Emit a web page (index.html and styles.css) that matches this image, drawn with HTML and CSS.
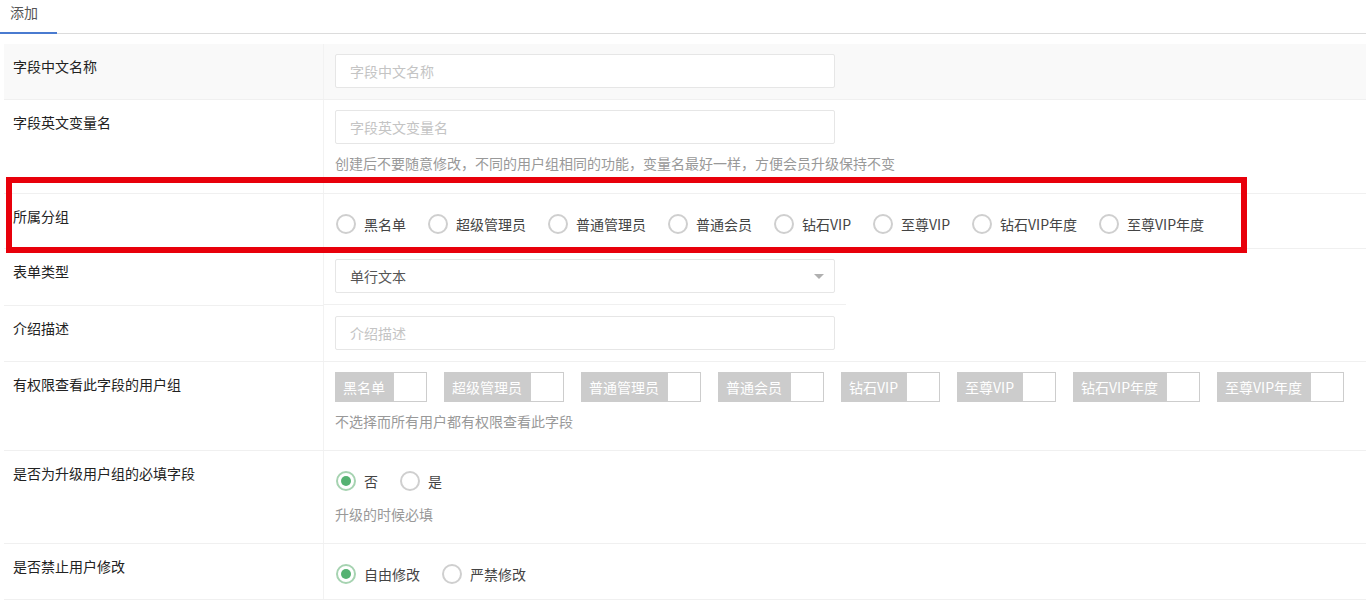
FILE: index.html
```html
<!DOCTYPE html>
<html lang="zh-CN">
<head>
<meta charset="utf-8">
<title>添加字段</title>
<link rel="stylesheet" href="styles.css">
</head>
<body>
<div class="tabs">
  <div class="tab active">添加</div>
</div>
<div class="form">
  <div class="row striped">
    <div class="label">字段中文名称</div>
    <div class="value"><div class="input placeholder">字段中文名称</div></div>
  </div>
  <div class="row r2">
    <div class="label">字段英文变量名</div>
    <div class="value">
      <div class="input placeholder">字段英文变量名</div>
      <div class="help">创建后不要随意修改，不同的用户组相同的功能，变量名最好一样，方便会员升级保持不变</div>
    </div>
  </div>
  <div class="row r3">
    <div class="label">所属分组</div>
    <div class="value radios">
      <span class="radio"><i></i>黑名单</span>
      <span class="radio"><i></i>超级管理员</span>
      <span class="radio"><i></i>普通管理员</span>
      <span class="radio"><i></i>普通会员</span>
      <span class="radio"><i></i>钻石VIP</span>
      <span class="radio"><i></i>至尊VIP</span>
      <span class="radio"><i></i>钻石VIP年度</span>
      <span class="radio"><i></i>至尊VIP年度</span>
    </div>
  </div>
  <div class="row r4">
    <div class="label">表单类型</div>
    <div class="value narrow">
      <div class="input select">单行文本<span class="caret"></span></div>
    </div>
  </div>
  <div class="row">
    <div class="label">介绍描述</div>
    <div class="value"><div class="input placeholder">介绍描述</div></div>
  </div>
  <div class="row r6">
    <div class="label">有权限查看此字段的用户组</div>
    <div class="value">
      <div class="switches">
        <span class="switch"><b>黑名单</b><i></i></span>
        <span class="switch"><b>超级管理员</b><i></i></span>
        <span class="switch"><b>普通管理员</b><i></i></span>
        <span class="switch"><b>普通会员</b><i></i></span>
        <span class="switch"><b>钻石VIP</b><i></i></span>
        <span class="switch"><b>至尊VIP</b><i></i></span>
        <span class="switch"><b>钻石VIP年度</b><i></i></span>
        <span class="switch"><b>至尊VIP年度</b><i></i></span>
      </div>
      <div class="help">不选择而所有用户都有权限查看此字段</div>
    </div>
  </div>
  <div class="row r7">
    <div class="label">是否为升级用户组的必填字段</div>
    <div class="value">
      <div class="radios">
        <span class="radio checked"><i></i>否</span>
        <span class="radio"><i></i>是</span>
      </div>
      <div class="help">升级的时候必填</div>
    </div>
  </div>
  <div class="row r8">
    <div class="label">是否禁止用户修改</div>
    <div class="value radios">
      <span class="radio checked"><i></i>自由修改</span>
      <span class="radio"><i></i>严禁修改</span>
    </div>
  </div>
  <div class="highlight"></div>
</div>
</body>
</html>
```

FILE: styles.css
```css
* { box-sizing: border-box; }
html, body { margin: 0; padding: 0; background: #fff; }
body {
  font-family: "Noto Sans CJK SC", "Noto Sans", sans-serif;
  font-size: 14px;
  line-height: 20px;
  color: #333;
  overflow: hidden;
}
.tabs {
  height: 34px;
  border-bottom: 1px solid #dcdcdc;
  display: flex;
}
.tab {
  padding: 2px 10px 0 10px;
  width: 57px;
  height: 34px;
  color: #555;
  border-bottom: 2px solid #4a7bd0;
  margin-bottom: -1px;
}
.form {
  position: relative;
  margin: 10px 0 0 4px;
}
.row {
  display: flex;
  border-bottom: 1px solid #f0f0f0;
}
.row.striped { background: #f9f9f9; }
.label {
  width: 320px;
  flex: none;
  padding: 12px 9px 13px 9px;
  border-right: 1px solid #f2f2f2;
  color: #222;
}
.value {
  flex: 1;
  padding: 10px 10px 11px 11px;
}
.input {
  width: 500px;
  height: 34px;
  border: 1px solid #e6e6e6;
  border-radius: 2px;
  background: #fff;
  padding: 6px 14px;
  color: #555;
  position: relative;
}
.input.placeholder { color: #c4c4c4; }
.caret {
  position: absolute;
  right: 10px;
  top: 14px;
  border-left: 5px solid transparent;
  border-right: 5px solid transparent;
  border-top: 5px solid #b0b0b0;
}
.help {
  color: #999;
  margin-top: 9px;
}
.r2 .value { padding-bottom: 20px; }
.r3 .value { padding-top: 20px; padding-bottom: 14px; }
.radios { display: flex; align-items: center; }
.radio {
  display: inline-flex;
  align-items: center;
  color: #444;
  margin-right: 21px;
  margin-left: 1px;
}
.radio i {
  width: 20px;
  height: 20px;
  border-radius: 50%;
  border: 2px solid #cfcfcf;
  margin-right: 8px;
  position: relative;
  background: #fff;
}
.radio.checked i { border-color: #a6d3b1; }
.radio.checked i::after {
  content: "";
  position: absolute;
  left: 3px;
  top: 3px;
  width: 10px;
  height: 10px;
  border-radius: 50%;
  background: #55b272;
}
.r4 { border-bottom: none; }
.r4 .value { flex: none; width: 522px; border-bottom: 1px solid #f0f0f0; }
.r4 + .row { border-top: 1px solid transparent; }
.r4 + .row .label { margin-top: -1px; border-top: 1px solid #f0f0f0; }
.r6 .value { padding-bottom: 19px; }
.switches { display: flex; gap: 17px; }
.switch {
  display: inline-flex;
  height: 30px;
  background: #cccccc;
}
.switch b {
  font-weight: normal;
  color: #fff;
  padding: 5px 8px;
}
.switch i {
  width: 34px;
  height: 30px;
  background: #fff;
  border: 1px solid #cdcdcd;
}
.r7 .value { padding-top: 20px; padding-bottom: 19px; }
.r7 .help { margin-top: 13px; }
.r8 .value { padding-top: 20px; padding-bottom: 15px; }
.highlight {
  position: absolute;
  left: 2px;
  top: 133px;
  width: 1241px;
  height: 76px;
  border: 6px solid #e8000b;
  pointer-events: none;
}
```
